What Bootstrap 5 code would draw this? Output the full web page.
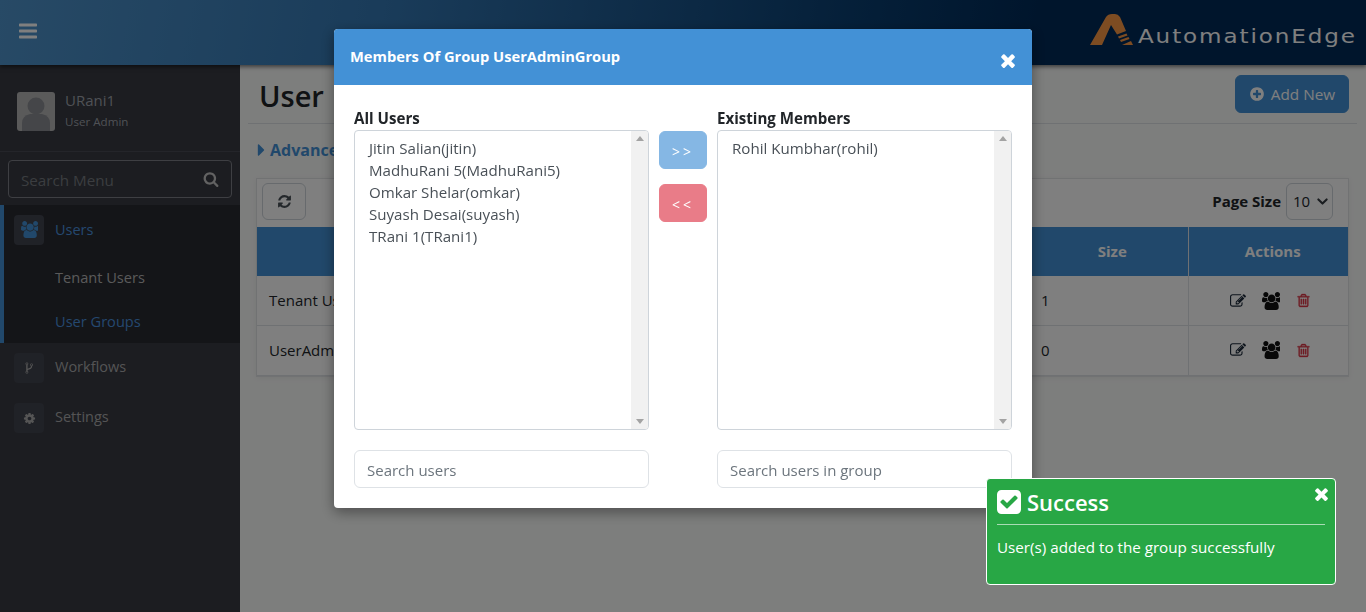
<!DOCTYPE html>
<html lang="en">
<head>
<meta charset="utf-8">
<title>User Groups</title>
<link href="https://cdn.jsdelivr.net/npm/bootstrap@5.3.0/dist/css/bootstrap.min.css" rel="stylesheet">
<style>
:root{--ae-blue:#4391d6}
html,body{height:100%;overflow:hidden}
body{font-family:"Open Sans","Noto Sans","Liberation Sans",sans-serif;font-size:14px;background:#fbfcfb;color:#212529}
svg.ic{fill:currentColor;display:block;flex:none}
.topbar{height:65px;flex:none;background:linear-gradient(100deg,#4f94cc 0,#3478b4 28%,#0a3f72 62%,#002a58 76%);box-shadow:0 2px 4px rgba(0,0,0,.5);position:relative;z-index:2}
.burger{color:#fff;margin-left:19px;margin-top:-3px}
.brand-logo{margin-right:9px;margin-top:-6px}
.brand-text{font-family:"DejaVu Sans",sans-serif;font-size:20px;letter-spacing:1.65px;color:#fff;line-height:1;padding-top:13px;transform:scaleX(1.153);transform-origin:right center;margin-left:32px}
.side{width:240px;flex:none;background:#383a42;color:#c8c9cc}
.userpanel{height:87px;padding:27px 17px 0;border-bottom:1px solid #494b54;gap:10px}
.avatar{width:38px;height:39px;border-radius:3px;background:#b5b5b5;overflow:hidden}
.uname{font-size:15px;line-height:20px;color:#9fa3ab;margin-top:-2px}
.urole{font-size:11.6px;line-height:20px;color:#9fa3ab;margin-top:2px}
.menu-search{margin:8px 8px 7px;height:38px;border:1px solid #7d7f86;border-radius:4px;padding:0 12px;color:#c4c4c4}
.menu-search input{background:transparent;border:0;outline:0;width:100%;font-size:15.2px;color:#fff;min-width:0;padding:2px 0 0}
.menu-search input::placeholder{color:#777a80;opacity:1}
.group-open{background:#282a30;border-left:4px solid var(--ae-blue);height:138px}
.mrow{height:50px;padding-left:14px;gap:11px;font-size:14.5px;color:#a8a9ab}
.mrow>span:last-child{margin-top:-2px}
.group-open .mrow{padding-left:10px;height:49px}
.group-open .mrow>span:last-child{margin-top:0}
.mbox{width:30px;height:30px;border-radius:4px;background:#40444e;flex:none;color:#aaa}
.group-open .mbox{color:var(--ae-blue)}
.sub{height:44px;padding-left:51px;padding-top:4px;font-size:14.6px;color:#b5b5b5}
.on{color:#4a90de}
.content{min-width:0;padding:0 17px 0 16px}
.pagehead{height:59px;margin:0 -8px;padding:0 8px;border-bottom:1px solid #dee2e6}
.pagehead h1{font-size:29px;font-weight:600;line-height:1;margin:3px 0 0 3px;color:#212529}
.addbtn{background:var(--ae-blue);border-color:var(--ae-blue);color:#fff;height:38px;width:114px;font-size:15.3px;gap:6px;padding:0}
.adv{height:54px;font-size:16px;font-weight:700;color:var(--ae-blue);gap:5px;padding:0 0 2px 1px}
.gridcard{border:1px solid #e3e4e6;background:#fff;border-radius:0;box-shadow:0 1px 6px rgba(0,0,0,.06)}
.tools{height:48px;padding:4px 15px 0 5px}
.refresh{width:44px;height:37px;padding:0;border:1px solid #ced4da;color:#495057;background:#fff}
.psize{font-size:15px;font-weight:700;gap:5px;color:#212529}
.psel{width:47px;height:37px;padding:0 0 0 6px;font-size:15px;background-image:url("data:image/svg+xml,%3csvg xmlns='http://www.w3.org/2000/svg' viewBox='0 0 16 16'%3e%3cpath fill='none' stroke='%23343a40' stroke-linecap='round' stroke-linejoin='round' stroke-width='3' d='m2 5 6 6 6-6'/%3e%3c/svg%3e");background-position:right 4px center;background-size:11px 11px;border-color:#ced4da}
.tbl{table-layout:fixed;margin:0;font-size:15px}
.tbl th{background:var(--ae-blue);color:#fff;height:49px;text-align:center;vertical-align:middle;border:0;font-weight:700;padding:0 0 0 9px}
.tbl th+th+th{border-left:1px solid #dee2e6}
.tbl td{height:49.5px;padding:0 12px;vertical-align:middle;border-color:#dee2e6;color:#212529}
.tbl td+td{padding-left:13px}
.tbl td+td+td{border-left:1px solid #dee2e6;padding-left:16px}
.acts{gap:16px}
.trash{stroke:currentColor;stroke-width:45}
.dlg{max-width:698px;width:698px;margin:29px auto 0}
.dlg .modal-content{border:0;border-radius:4px;box-shadow:0 4px 14px rgba(0,0,0,.4)}
.dlg .modal-header{height:56px;background:var(--ae-blue);border:0;border-radius:4px 4px 0 0;padding:0 17px 0 16px;color:#fff}
.dlg .modal-title{font-size:14.7px;font-weight:700;margin-top:-1px}
.dlg .modal-body{padding:20px;gap:10px}
.pane{width:295px;flex:none}
.pane-label{height:25px;font-size:15.1px;font-weight:700;line-height:26px;color:#212529}
.listbox{height:300px;border:1px solid #ced4da;border-radius:4px;overflow:hidden}
.listitems{padding:6px 14px;font-size:15.1px;line-height:22px;color:#495057}
.fakebar{width:17px;background:#f1f1f1;padding:5px 0;color:#a3a3a3}
.tri-up{width:0;height:0;border:4px solid transparent;border-top:0;border-bottom:5px solid currentColor;margin:0 auto}
.tri-down{width:0;height:0;border:4px solid transparent;border-bottom:0;border-top:5px solid currentColor;margin:0 auto}
.pane input.form-control{height:38px;margin-top:20px;font-size:15px;padding:2px 12px 0}
.pane input.form-control::placeholder{color:#6c757d}
.movers{width:48px;flex:none;padding-top:26px;gap:15px}
.movers .btn{width:48px;height:38px;padding:2px 0 0;font-size:14px;letter-spacing:3px;color:#fff;opacity:1}
.mv-add{background:#85b7e4;border-color:#85b7e4}
.mv-del{background:#e97c88;border-color:#e97c88}
.toastbox{position:fixed;left:986px;top:478px;width:350px;height:107px;z-index:1060;background:#28a745;border:1px solid #fff;border-radius:4px;color:#fff;padding:9px 10px 0}
.toast-title{font-size:22px;font-weight:600;line-height:28px;gap:6px;padding-bottom:8px;border-bottom:1px solid rgba(255,255,255,.6)}
.toast-msg{font-size:15.2px;margin-top:11px;line-height:22px}
.toast-x{position:absolute;right:7px;top:8px}
.modal-x{margin-top:7px}
</style>
</head>
<body class="d-flex flex-column">
<header class="topbar d-flex align-items-center justify-content-between">
  <svg class="ic burger" width="18" height="18" viewBox="128 256 1536 1280"><path d="M1664 1344v128q0 26-19 45t-45 19h-1408q-26 0-45-19t-19-45v-128q0-26 19-45t45-19h1408q26 0 45 19t19 45zm0-512v128q0 26-19 45t-45 19h-1408q-26 0-45-19t-19-45v-128q0-26 19-45t45-19h1408q26 0 45 19t19 45zm0-512v128q0 26-19 45t-45 19h-1408q-26 0-45-19t-19-45v-128q0-26 19-45t45-19h1408q26 0 45 19t19 45z"/></svg>
  <div class="brand-logo d-flex align-items-center">
    <svg width="45" height="32" viewBox="0 0 45 32"><path fill="#fb9845" d="M0 31 16 3Q18 0 22 0h3q3 0 5 3l6 14-9 3.5-6-9.500L12 31z"/><path fill="#fb9845" d="M28 22.500l8.500-3 1 2-8.500 3zM30 26l8.500-3 1 2-8.500 3zM32 31l9-4 2 4z"/></svg>
    <span class="brand-text">AutomationEdge</span>
  </div>
</header>
<div class="d-flex flex-grow-1" style="min-height:0">
  <nav class="side d-flex flex-column">
    <div class="userpanel d-flex">
      <div class="avatar"><svg width="38" height="39" viewBox="0 0 38 39"><circle cx="19" cy="14" r="8.500" fill="#8b8d92"/><path fill="#8b8d92" d="M5 39v-8q0-7 8-9h12q8 2 8 9v8z"/></svg></div>
      <div><div class="uname">URani1</div><div class="urole">User Admin</div></div>
    </div>
    <div class="menu-search d-flex align-items-center">
      <input type="text" placeholder="Search Menu" aria-label="Search Menu">
      <svg class="ic" width="16" height="16" viewBox="0 0 1792 1792"><path d="M1216 832q0-185-131.5-316.5t-316.5-131.5-316.5 131.5-131.5 316.5 131.5 316.5 316.5 131.5 316.5-131.5 131.5-316.5zm512 832q0 52-38 90t-90 38q-54 0-90-38l-343-342q-179 124-399 124-143 0-273.5-55.5t-225-150-150-225-55.5-273.5 55.5-273.5 150-225 225-150 273.5-55.5 273.5 55.5 225 150 150 225 55.5 273.5q0 220-124 399l343 343q37 37 37 90z"/></svg>
    </div>
    <div class="group-open">
      <div class="mrow d-flex align-items-center on">
        <span class="mbox d-flex align-items-center justify-content-center"><svg class="ic" width="17" height="17" viewBox="0 0 1792 1792"><path d="M593 896q-162 5-265 128h-134q-82 0-138-40.5t-56-118.5q0-353 124-353 6 0 43.5 21t97.5 42.5 119 21.5q67 0 133-23-5 37-5 66 0 139 81 256zm1071 637q0 120-73 189.5t-194 69.5h-874q-121 0-194-69.5t-73-189.5q0-53 3.5-103.5t14-109 26.5-108.5 43-97.5 62-81 85.5-53.5 111.5-20q10 0 43 21.5t73 48 107 48 135 21.5 135-21.5 107-48 73-48 43-21.5q61 0 111.5 20t85.5 53.5 62 81 43 97.5 26.5 108.5 14 109 3.5 103.5zm-1024-1277q0 106-75 181t-181 75-181-75-75-181 75-181 181-75 181 75 75 181zm704 384q0 159-112.5 271.5t-271.5 112.5-271.5-112.5-112.5-271.5 112.5-271.5 271.5-112.5 271.5 112.5 112.5 271.5zm576 225q0 78-56 118.5t-138 40.5h-134q-103-123-265-128 81-117 81-256 0-29-5-66 66 23 133 23 59 0 119-21.5t97.5-42.5 43.5-21q124 0 124 353zm-128-609q0 106-75 181t-181 75-181-75-75-181 75-181 181-75 181 75 75 181z"/></svg></span>
        <span>Users</span>
      </div>
      <div class="sub d-flex align-items-center">Tenant Users</div>
      <div class="sub d-flex align-items-center on">User Groups</div>
    </div>
    <div class="mrow d-flex align-items-center">
      <span class="mbox d-flex align-items-center justify-content-center"><svg class="ic" width="13" height="13" viewBox="176 0 1100 1792"><path d="M464 1408q0-40-28-68t-68-28-68 28-28 68 28 68 68 28 68-28 28-68zm0-1152q0-40-28-68t-68-28-68 28-28 68 28 68 68 28 68-28 28-68zm640 128q0-40-28-68t-68-28-68 28-28 68 28 68 68 28 68-28 28-68zm96 0q0 52-26 96.5t-70 69.5q-2 287-226 414-67 38-203 81-128 40-169.5 71t-41.5 100v26q44 25 70 69.5t26 96.5q0 80-56 136t-136 56-136-56-56-136q0-52 26-96.5t70-69.5v-820q-44-25-70-69.5t-26-96.5q0-80 56-136t136-56 136 56 56 136q0 52-26 96.5t-70 69.5v497q54-26 154-57 55-17 87.5-29.5t70.5-31 59-39.5 40.5-51 28-69.5 8.5-91.5q-44-25-70-69.5t-26-96.5q0-80 56-136t136-56 136 56 56 136z"/></svg></span>
      <span>Workflows</span>
    </div>
    <div class="mrow d-flex align-items-center">
      <span class="mbox d-flex align-items-center justify-content-center"><svg class="ic" width="13" height="13" viewBox="0 0 1792 1792"><path d="M1152 896q0-106-75-181t-181-75-181 75-75 181 75 181 181 75 181-75 75-181zm512-109v222q0 12-8 23t-20 13l-185 28q-19 54-39 91 35 50 107 138 10 12 10 25t-9 23q-27 37-99 108t-94 71q-12 0-26-9l-138-108q-44 23-91 38-16 136-29 186-7 28-36 28h-222q-14 0-24.5-8.5t-11.5-21.5l-28-184q-49-16-90-37l-141 107q-10 9-25 9-14 0-25-11-126-114-165-168-7-10-7-23 0-12 8-23 15-21 51-66.5t54-70.5q-27-50-41-99l-183-27q-13-2-21-12.5t-8-23.5v-222q0-12 8-23t19-13l186-28q14-46 39-92-40-57-107-138-10-12-10-24 0-10 9-23 26-36 98.5-107.5t94.5-71.5q13 0 26 10l138 107q44-23 91-38 16-136 29-186 7-28 36-28h222q14 0 24.5 8.5t11.5 21.5l28 184q49 16 90 37l142-107q9-9 24-9 13 0 25 10 129 119 165 170 7 8 7 22 0 12-8 23-15 21-51 66.5t-54 70.5q26 50 41 98l183 28q13 2 21 12.5t8 23.5z"/></svg></span>
      <span>Settings</span>
    </div>
  </nav>
  <main class="content flex-grow-1">
    <div class="pagehead d-flex align-items-center justify-content-between">
      <h1>User</h1>
      <button class="btn addbtn d-flex align-items-center justify-content-center" type="button">
        <svg class="ic" width="16" height="16" viewBox="0 0 1792 1792"><path d="M1344 960v-128q0-26-19-45t-45-19h-256v-256q0-26-19-45t-45-19h-128q-26 0-45 19t-19 45v256h-256q-26 0-45 19t-19 45v128q0 26 19 45t45 19h256v256q0 26 19 45t45 19h128q26 0 45-19t19-45v-256h256q26 0 45-19t19-45zm320-64q0 209-103 385.5t-279.5 279.5-385.5 103-385.5-103-279.5-279.5-103-385.5 103-385.5 279.5-279.5 385.5-103 385.5 103 279.5 279.5 103 385.5z"/></svg>
        Add New
      </button>
    </div>
    <div class="adv d-flex align-items-center">
      <svg class="ic" width="8" height="12" viewBox="576 352 576 1088"><path d="M1152 896q0 26-19 45l-448 448q-19 19-45 19t-45-19-19-45v-896q0-26 19-45t45-19 45 19l448 448q19 19 19 45z"/></svg>
      Advanced
    </div>
    <div class="gridcard">
      <div class="tools d-flex align-items-start justify-content-between">
        <button class="btn refresh d-flex align-items-center justify-content-center" type="button" aria-label="Refresh">
          <svg class="ic" width="15" height="15" viewBox="0 0 1792 1792"><path d="M1639 1056q0 5-1 7-64 268-268 434.5t-478 166.5q-146 0-282.5-55t-243.5-157l-129 129q-19 19-45 19t-45-19-19-45v-448q0-26 19-45t45-19h448q26 0 45 19t19 45-19 45l-137 137q71 66 161 102t187 36q134 0 250-65t186-179q11-17 53-117 8-23 30-23h192q13 0 22.5 9.5t9.5 22.5zm25-800v448q0 26-19 45t-45 19h-448q-26 0-45-19t-19-45 19-45l138-138q-148-137-349-137-134 0-250 65t-186 179q-11 17-53 117-8 23-30 23h-199q-13 0-22.5-9.5t-9.5-22.5v-7q65-268 270-434.5t480-166.5q146 0 284 55.5t245 156.5l130-129q19-19 45-19t45 19 19 45z"/></svg>
        </button>
        <div class="psize d-flex align-items-center">Page Size
          <select class="form-select psel" aria-label="Page Size"><option>10</option><option>25</option></select>
        </div>
      </div>
      <table class="table tbl">
        <colgroup><col><col style="width:160px"><col style="width:160px"></colgroup>
        <thead><tr><th>Name</th><th>Size</th><th>Actions</th></tr></thead>
        <tbody>
          <tr><td>Tenant Users Group</td><td>1</td><td>
            <div class="acts d-flex justify-content-center align-items-center">
              <svg class="ic" style="color:#1d2a3a" width="16" height="16" viewBox="0 0 1792 1792"><path d="M888 1184l116-116-152-152-116 116v56h96v96h56zm440-720q-16-16-33 1l-350 350q-17 17-1 33t33-1l350-350q17-17 1-33zm80 594v190q0 119-84.5 203.5t-203.5 84.5h-832q-119 0-203.5-84.5t-84.5-203.5v-832q0-119 84.5-203.5t203.5-84.5h832q63 0 117 25 15 7 18 23 3 17-9 29l-49 49q-14 14-32 8-23-6-45-6h-832q-66 0-113 47t-47 113v832q0 66 47 113t113 47h832q66 0 113-47t47-113v-126q0-13 9-22l64-64q15-15 35-9t20 29zm-96-738l288 288-672 672h-288v-288zm444 132l-92 92-288-288 92-92q28-28 68-28t68 28l152 152q28 28 28 68t-28 68z"/></svg>
              <svg class="ic" style="color:#111" width="18" height="18" viewBox="0 0 1792 1792"><path d="M593 896q-162 5-265 128h-134q-82 0-138-40.5t-56-118.5q0-353 124-353 6 0 43.5 21t97.5 42.5 119 21.5q67 0 133-23-5 37-5 66 0 139 81 256zm1071 637q0 120-73 189.5t-194 69.5h-874q-121 0-194-69.5t-73-189.5q0-53 3.5-103.5t14-109 26.5-108.5 43-97.5 62-81 85.5-53.5 111.5-20q10 0 43 21.5t73 48 107 48 135 21.5 135-21.5 107-48 73-48 43-21.5q61 0 111.5 20t85.5 53.5 62 81 43 97.5 26.5 108.5 14 109 3.5 103.5zm-1024-1277q0 106-75 181t-181 75-181-75-75-181 75-181 181-75 181 75 75 181zm704 384q0 159-112.5 271.5t-271.5 112.5-271.5-112.5-112.5-271.5 112.5-271.5 271.5-112.5 271.5 112.5 112.5 271.5zm576 225q0 78-56 118.5t-138 40.5h-134q-103-123-265-128 81-117 81-256 0-29-5-66 66 23 133 23 59 0 119-21.5t97.5-42.5 43.5-21q124 0 124 353zm-128-609q0 106-75 181t-181 75-181-75-75-181 75-181 181-75 181 75 75 181z"/></svg>
              <svg class="ic trash" style="color:#dc3545" width="15" height="15" viewBox="0 0 1792 1792"><path d="M704 736v576q0 14-9 23t-23 9h-64q-14 0-23-9t-9-23v-576q0-14 9-23t23-9h64q14 0 23 9t9 23zm256 0v576q0 14-9 23t-23 9h-64q-14 0-23-9t-9-23v-576q0-14 9-23t23-9h64q14 0 23 9t9 23zm256 0v576q0 14-9 23t-23 9h-64q-14 0-23-9t-9-23v-576q0-14 9-23t23-9h64q14 0 23 9t9 23zm128 724v-948h-896v948q0 22 7 40.5t14.5 27 10.5 8.5h832q3 0 10.5-8.5t14.5-27 7-40.5zm-672-1076h448l-48-117q-7-9-17-11h-317q-10 2-17 11zm928 32v64q0 14-9 23t-23 9h-96v948q0 83-47 143.5t-113 60.5h-832q-66 0-113-58.5t-47-141.5v-952h-96q-14 0-23-9t-9-23v-64q0-14 9-23t23-9h309l70-167q15-37 54-63t79-26h320q40 0 79 26t54 63l70 167h309q14 0 23 9t9 23z"/></svg>
            </div></td></tr>
          <tr><td>UserAdminGroup</td><td>0</td><td>
            <div class="acts d-flex justify-content-center align-items-center">
              <svg class="ic" style="color:#1d2a3a" width="16" height="16" viewBox="0 0 1792 1792"><path d="M888 1184l116-116-152-152-116 116v56h96v96h56zm440-720q-16-16-33 1l-350 350q-17 17-1 33t33-1l350-350q17-17 1-33zm80 594v190q0 119-84.5 203.5t-203.5 84.5h-832q-119 0-203.5-84.5t-84.5-203.5v-832q0-119 84.5-203.5t203.5-84.5h832q63 0 117 25 15 7 18 23 3 17-9 29l-49 49q-14 14-32 8-23-6-45-6h-832q-66 0-113 47t-47 113v832q0 66 47 113t113 47h832q66 0 113-47t47-113v-126q0-13 9-22l64-64q15-15 35-9t20 29zm-96-738l288 288-672 672h-288v-288zm444 132l-92 92-288-288 92-92q28-28 68-28t68 28l152 152q28 28 28 68t-28 68z"/></svg>
              <svg class="ic" style="color:#111" width="18" height="18" viewBox="0 0 1792 1792"><path d="M593 896q-162 5-265 128h-134q-82 0-138-40.5t-56-118.5q0-353 124-353 6 0 43.5 21t97.5 42.5 119 21.5q67 0 133-23-5 37-5 66 0 139 81 256zm1071 637q0 120-73 189.5t-194 69.5h-874q-121 0-194-69.5t-73-189.5q0-53 3.5-103.5t14-109 26.5-108.5 43-97.5 62-81 85.5-53.5 111.5-20q10 0 43 21.5t73 48 107 48 135 21.5 135-21.5 107-48 73-48 43-21.5q61 0 111.5 20t85.5 53.5 62 81 43 97.5 26.5 108.5 14 109 3.5 103.5zm-1024-1277q0 106-75 181t-181 75-181-75-75-181 75-181 181-75 181 75 75 181zm704 384q0 159-112.5 271.5t-271.5 112.5-271.5-112.5-112.5-271.5 112.5-271.5 271.5-112.5 271.5 112.5 112.5 271.5zm576 225q0 78-56 118.5t-138 40.5h-134q-103-123-265-128 81-117 81-256 0-29-5-66 66 23 133 23 59 0 119-21.5t97.5-42.5 43.5-21q124 0 124 353zm-128-609q0 106-75 181t-181 75-181-75-75-181 75-181 181-75 181 75 75 181z"/></svg>
              <svg class="ic trash" style="color:#dc3545" width="15" height="15" viewBox="0 0 1792 1792"><path d="M704 736v576q0 14-9 23t-23 9h-64q-14 0-23-9t-9-23v-576q0-14 9-23t23-9h64q14 0 23 9t9 23zm256 0v576q0 14-9 23t-23 9h-64q-14 0-23-9t-9-23v-576q0-14 9-23t23-9h64q14 0 23 9t9 23zm256 0v576q0 14-9 23t-23 9h-64q-14 0-23-9t-9-23v-576q0-14 9-23t23-9h64q14 0 23 9t9 23zm128 724v-948h-896v948q0 22 7 40.5t14.5 27 10.5 8.5h832q3 0 10.5-8.5t14.5-27 7-40.5zm-672-1076h448l-48-117q-7-9-17-11h-317q-10 2-17 11zm928 32v64q0 14-9 23t-23 9h-96v948q0 83-47 143.5t-113 60.5h-832q-66 0-113-58.5t-47-141.5v-952h-96q-14 0-23-9t-9-23v-64q0-14 9-23t23-9h309l70-167q15-37 54-63t79-26h320q40 0 79 26t54 63l70 167h309q14 0 23 9t9 23z"/></svg>
            </div></td></tr>
        </tbody>
      </table>
    </div>
  </main>
</div>

<div class="modal-backdrop fade show"></div>
<div class="modal d-block" tabindex="-1" role="dialog" aria-modal="true">
  <div class="modal-dialog dlg">
    <div class="modal-content">
      <div class="modal-header d-flex align-items-center justify-content-between">
        <h5 class="modal-title">Members Of Group UserAdminGroup</h5>
        <svg class="ic modal-x" width="15" height="15" viewBox="200 280 1300 1250"><path d="M1490 1322q0 40-28 68l-136 136q-28 28-68 28t-68-28l-294-294-294 294q-28 28-68 28t-68-28l-136-136q-28-28-28-68t28-68l294-294-294-294q-28-28-28-68t28-68l136-136q28-28 68-28t68 28l294 294 294-294q28-28 68-28t68 28l136 136q28 28 28 68t-28 68l-294 294 294 294q28 28 28 68z"/></svg>
      </div>
      <div class="modal-body d-flex">
        <div class="pane">
          <div class="pane-label">All Users</div>
          <div class="listbox d-flex">
            <div class="listitems flex-grow-1">
              <div>Jitin Salian(jitin)</div>
              <div>MadhuRani 5(MadhuRani5)</div>
              <div>Omkar Shelar(omkar)</div>
              <div>Suyash Desai(suyash)</div>
              <div>TRani 1(TRani1)</div>
            </div>
            <div class="fakebar d-flex flex-column justify-content-between"><div class="tri-up"></div><div class="tri-down"></div></div>
          </div>
          <input class="form-control" type="text" placeholder="Search users" aria-label="Search users">
        </div>
        <div class="movers d-flex flex-column">
          <button class="btn mv-add" type="button">&gt;&gt;</button>
          <button class="btn mv-del" type="button">&lt;&lt;</button>
        </div>
        <div class="pane">
          <div class="pane-label">Existing Members</div>
          <div class="listbox d-flex">
            <div class="listitems flex-grow-1"><div>Rohil Kumbhar(rohil)</div></div>
            <div class="fakebar d-flex flex-column justify-content-between"><div class="tri-up"></div><div class="tri-down"></div></div>
          </div>
          <input class="form-control" type="text" placeholder="Search users in group" aria-label="Search users in group">
        </div>
      </div>
    </div>
  </div>
</div>

<div class="toastbox" role="alert">
  <svg class="ic toast-x" width="14" height="14" viewBox="200 280 1300 1250"><path d="M1490 1322q0 40-28 68l-136 136q-28 28-68 28t-68-28l-294-294-294 294q-28 28-68 28t-68-28l-136-136q-28-28-28-68t28-68l294-294-294-294q-28-28-28-68t28-68l136-136q28-28 68-28t68 28l294 294 294-294q28-28 68-28t68 28l136 136q28 28 28 68t-28 68l-294 294 294 294q28 28 28 68z"/></svg>
  <div class="toast-title d-flex align-items-center">
    <svg class="ic" width="24" height="24" viewBox="128 128 1536 1536"><path d="M813 1299l614-614q19-19 19-45t-19-45l-102-102q-19-19-45-19t-45 19l-467 467-211-211q-19-19-45-19t-45 19l-102 102q-19 19-19 45t19 45l358 358q19 19 45 19t45-19zm851-883v960q0 119-84.5 203.5t-203.5 84.5h-960q-119 0-203.5-84.5t-84.5-203.5v-960q0-119 84.5-203.5t203.5-84.5h960q119 0 203.5 84.5t84.5 203.5z"/></svg>
    Success
  </div>
  <div class="toast-msg">User(s) added to the group successfully</div>
</div>
</body>
</html>
